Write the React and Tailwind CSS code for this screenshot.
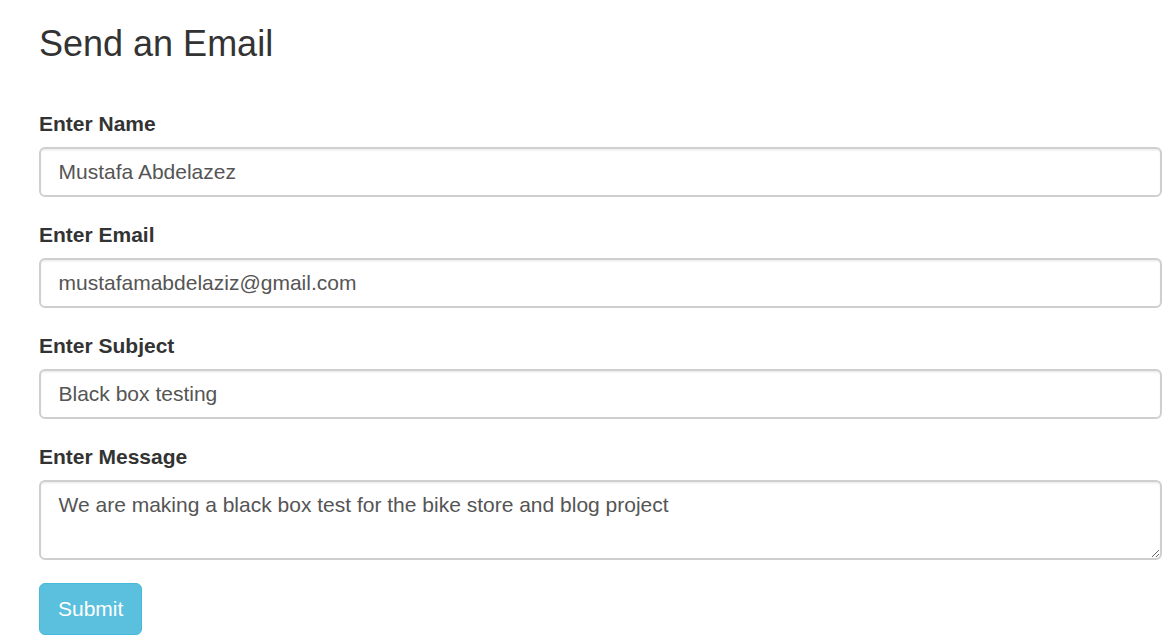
export default function App() {
    const fields = [
        { label: 'Enter Name', value: 'Mustafa Abdelazez' },
        { label: 'Enter Email', value: 'mustafamabdelaziz@gmail.com' },
        { label: 'Enter Subject', value: 'Black box testing' },
    ];

    const inputClass =
        "block w-full rounded-[6px] border-2 border-[#cfcfcf] bg-white px-[17.5px] text-[21px] text-[#555] shadow-[inset_0_1.5px_1.5px_rgba(0,0,0,0.075)] outline-none";

    return (
        <div className="min-h-screen bg-white pl-[39px] pr-[6px] pt-[24px] font-['Liberation_Sans',Arial,sans-serif] text-[#333]">
            {/* Heading */}
            <h3 className="text-[36px] leading-[40px] font-normal">Send an Email</h3>

            {/* Form */}
            <form className="mt-[45px]" onSubmit={(e) => e.preventDefault()}>
                {fields.map((f) => (
                    <div key={f.label} className="mb-[23.5px]">
                        <label className="mb-[7.5px] block text-[21px] leading-[30px] font-bold">
                            {f.label}
                        </label>
                        <input
                            type="text"
                            defaultValue={f.value}
                            className={inputClass + ' h-[50px] leading-[30px]'}
                        />
                    </div>
                ))}

                <div className="mb-[23px]">
                    <label className="mb-[7.5px] block text-[21px] leading-[30px] font-bold">
                        Enter Message
                    </label>
                    <textarea
                        defaultValue="We are making a black box test for the bike store and blog project"
                        className={inputClass + ' h-[80px] resize-y py-[8.5px] leading-[30px]'}
                    />
                </div>

                <button
                    type="submit"
                    className="h-[52px] rounded-[6px] border-[1.5px] border-[#46b8da] bg-[#5bc0de] px-[18px] text-[21px] leading-[30px] text-white"
                >
                    Submit
                </button>
            </form>
        </div>
    );
}
